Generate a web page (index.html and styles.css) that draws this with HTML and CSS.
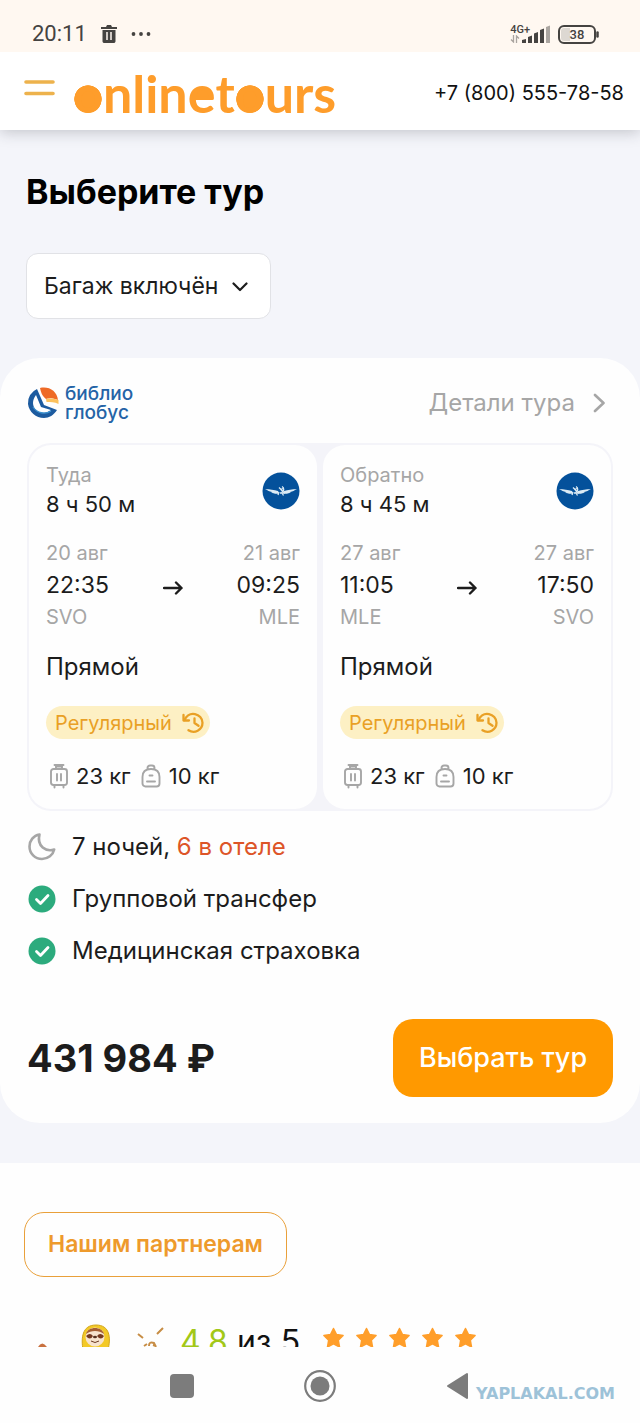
FILE: index.html
```html
<!DOCTYPE html>
<html lang="ru">
<head>
<meta charset="utf-8">
<meta name="viewport" content="width=device-width, initial-scale=1">
<title>Выберите тур</title>
<link rel="stylesheet" href="styles.css">
</head>
<body>
<svg class="sprite" aria-hidden="true">
  <symbol id="star" viewBox="0 0 22 22"><path d="M11 1.500l3 6 6.600 1-4.800 4.700 1.200 6.800-6-3.200-6 3.200 1.200-6.800L1.400 8.500l6.600-1z" fill="#ff9e2a" stroke="#ff9e2a" stroke-width="1.500" stroke-linejoin="round"/></symbol>
  <symbol id="wings" viewBox="0 0 38 38">
    <circle cx="19" cy="19" r="18.500" fill="#04519b"/>
    <path d="M3 17c5 .4 9 .7 13 2l1 2.500c-3 .6-6 0-8-1.300l2 .1c-3-.5-5-1.300-6-2.200l2 .1C5 17.800 3.500 17.500 3 17zM35 17c-5 .4-9 .7-13 2l-1 2.500c3 .6 6 0 8-1.300l-2 .1c3-.5 5-1.300 6-2.200l-2 .1c2-.4 3.500-.7 4-1.200z" fill="#dcebf5"/>
    <path d="M20 14.500c2.500 1.500 2.300 5-.5 6M17 15.500l2 2 2-1M18.500 17l4 4.500M17 20l-1 3M20 21l1.500 2.500M18 21h2.500" fill="none" stroke="#dcebf5" stroke-width="1.300"/>
  </symbol>
  <symbol id="arrow" viewBox="0 0 20 14"><path d="M1 7h17.500M13 1.500L18.500 7 13 12.500" fill="none" stroke="#1c1c1c" stroke-width="2.400" stroke-linecap="round" stroke-linejoin="round"/></symbol>
  <symbol id="history" viewBox="0 0 22 22"><path d="M1.500 3v5.500H7" fill="none" stroke="#e9a025" stroke-width="2.300" stroke-linecap="round" stroke-linejoin="round"/><path d="M2.500 8C5 3 9 1.300 13 2.100c4 .8 7.500 4.300 7.500 8.700a9 9 0 0 1-14 7.400M12.500 6.500V11l4 2.800" fill="none" stroke="#e9a025" stroke-width="2.300" stroke-linecap="round" stroke-linejoin="round"/></symbol>
  <symbol id="suitcase" viewBox="0 0 18 26"><path d="M3.500 6h11A2.500 2.500 0 0 1 17 8.500v11a2.500 2.500 0 0 1-2.500 2.500h-11A2.500 2.500 0 0 1 1 19.500v-11A2.500 2.500 0 0 1 3.500 6zM6 6V3.500h6V6M4.500 2h9M7 11v6.500M11 11v6.500M4.500 22v2.500M13.500 22v2.500" fill="none" stroke="#a6a6a6" stroke-width="1.900" stroke-linecap="round"/></symbol>
  <symbol id="backpack" viewBox="0 0 20 24"><path d="M1.500 13c0-5 3-8 8.500-8s8.500 3 8.500 8v6.500a3 3 0 0 1-3 3h-11a3 3 0 0 1-3-3zM6.500 5.500V4a2.500 2.500 0 0 1 2.500-2.500h2A2.500 2.500 0 0 1 13.500 4v1.500M8.500 11.500h3M6 17.500h8" fill="none" stroke="#a6a6a6" stroke-width="1.900" stroke-linecap="round"/></symbol>
  <symbol id="check" viewBox="0 0 28 28"><circle cx="14" cy="14" r="13.500" fill="#2cab7d"/><path d="M8.500 14.500l4 4 7.500-8" fill="none" stroke="#fff" stroke-width="2.800" stroke-linecap="round" stroke-linejoin="round"/></symbol>
</svg>

<div class="statusbar">
  <div class="status-group">
    <span class="clock">20:11</span>
    <svg width="16" height="19" viewBox="0 0 16 19"><path d="M0 2h5l1-2h4l1 2h5v2H0zM1.500 5h13v11.500A1.800 1.800 0 0 1 12.700 18H3.300a1.800 1.800 0 0 1-1.800-1.500z" fill="#454341"/><path d="M6 7v8M10 7v8" stroke="#fff8f1" stroke-width="1.500"/></svg>
    <svg width="20" height="6" viewBox="0 0 20 6"><g fill="#454341"><circle cx="2.500" cy="3" r="1.900"/><circle cx="10" cy="3" r="1.900"/><circle cx="17.500" cy="3" r="1.900"/></g></svg>
  </div>
  <div class="status-group status-right">
    <div class="network"><span>4G+</span>
      <svg width="10" height="8" viewBox="0 0 10 8"><path d="M3.500 0v7L1 4.500M6.500 8V1L9 3.500" fill="none" stroke="#aaa5a0" stroke-width="1.300"/></svg>
    </div>
    <svg width="29" height="19" viewBox="0 0 29 19"><path d="M1 18v-3l4-1v4zM7 18v-6l4-1.500V18zM13 18V8.500L17 7v11zM19 18V5l4-1.500V18z" fill="#454341"/><path d="M25 18V2l4-1.500V18z" fill="#aaa5a0"/></svg>
    <svg width="42" height="19" viewBox="0 0 42 19"><rect x="1" y="1" width="36" height="17" rx="5" fill="#fff8f1" stroke="#454341" stroke-width="2"/><path d="M6 3h6v13H6a3 3 0 0 1-3-3V6a3 3 0 0 1 3-3z" fill="#ddd8d2"/><path d="M39.500 7.500v4" stroke="#454341" stroke-width="2.500" stroke-linecap="round"/><text x="19" y="14" text-anchor="middle" class="battery-text">38</text></svg>
  </div>
</div>

<header class="header">
  <button class="menu" type="button" aria-label="Меню"><svg width="31" height="18" viewBox="0 0 31 18"><path d="M2 3h27M2 14.500h27" stroke="#edb24c" stroke-width="3.600" stroke-linecap="round"/></svg></button>
  <a class="brand" href="#"><span class="disc">o</span>nlin<span class="bowl">e</span>t<span class="disc">o</span>urs</a>
  <a class="phone" href="tel:+78005557858">+7 (800) 555-78-58</a>
</header>

<main class="tours">
  <h1>Выберите тур</h1>
  <div class="filter">
    <select aria-label="Багаж"><option>Багаж включён</option></select>
    <svg width="16" height="10" viewBox="0 0 16 10"><path d="M1.500 1.500L8 8l6.500-6.500" fill="none" stroke="#1c1c1c" stroke-width="2.200" stroke-linecap="round" stroke-linejoin="round"/></svg>
  </div>

  <article class="card">
    <div class="card-head">
      <div class="operator">
        <svg width="32" height="32" viewBox="0 0 32 32"><path d="M10 2A15 15 0 0 0 1 17c1 8 8 14 16 14 5 0 10-3 13-8l-13-5z" fill="#1d5b9f"/><path d="M9 8c-4 5-4 11 0 15 5 4 11 3 15 0l-10-3z" fill="#fff"/><path d="M6 20c4 6 12 8 18 4" fill="none" stroke="#3c92d0" stroke-width="1.300"/><path d="M13 1c9-2 17 3 18 12-5-2-9-2-12-1-4-3-5-7-6-11z" fill="#ee6a26"/><path d="M19 12c5-1 9 0 12.500 1v4c-4-2-8-2-12-2z" fill="#fcc15d"/></svg>
        <span class="operator-name"><span>библио</span><span>глобус</span></span>
      </div>
      <a class="details" href="#">Детали тура <svg width="12" height="20" viewBox="0 0 12 20"><path d="M2 2l8.500 8L2 18" fill="none" stroke="#a6a6a6" stroke-width="2.600" stroke-linecap="round" stroke-linejoin="round"/></svg></a>
    </div>

    <div class="flights">
      <section class="flight">
        <div class="flight-head"><div><div class="muted">Туда</div><div class="duration">8 ч 50 м</div></div><svg class="airline"><use href="#wings"/></svg></div>
        <div class="route">
          <div><div class="muted">20 авг</div><div class="time">22:35</div><div class="muted">SVO</div></div>
          <svg class="arrow"><use href="#arrow"/></svg>
          <div class="arrival"><div class="muted">21 авг</div><div class="time">09:25</div><div class="muted">MLE</div></div>
        </div>
        <div>Прямой</div>
        <div class="badge">Регулярный <svg width="22" height="22"><use href="#history"/></svg></div>
        <div class="bags"><svg width="18" height="26"><use href="#suitcase"/></svg><span>23 кг</span><svg class="pack"><use href="#backpack"/></svg><span>10 кг</span></div>
      </section>
      <section class="flight">
        <div class="flight-head"><div><div class="muted">Обратно</div><div class="duration">8 ч 45 м</div></div><svg class="airline"><use href="#wings"/></svg></div>
        <div class="route">
          <div><div class="muted">27 авг</div><div class="time">11:05</div><div class="muted">MLE</div></div>
          <svg class="arrow"><use href="#arrow"/></svg>
          <div class="arrival"><div class="muted">27 авг</div><div class="time">17:50</div><div class="muted">SVO</div></div>
        </div>
        <div>Прямой</div>
        <div class="badge">Регулярный <svg width="22" height="22"><use href="#history"/></svg></div>
        <div class="bags"><svg width="18" height="26"><use href="#suitcase"/></svg><span>23 кг</span><svg class="pack"><use href="#backpack"/></svg><span>10 кг</span></div>
      </section>
    </div>

    <ul class="features">
      <li><svg width="28" height="28" viewBox="0 0 28 28"><path d="M11.500 1.500C5.500 2.500 1.500 7.500 1.500 13.500c0 7 5.500 12.500 12.500 12.500 6 0 11-4 12.200-9.500-8 2.500-17.700-3-14.700-15z" fill="none" stroke="#a6a6a6" stroke-width="2.600" stroke-linejoin="round"/></svg><span>7 ночей, <em>6 в отеле</em></span></li>
      <li><svg width="28" height="28"><use href="#check"/></svg><span>Групповой трансфер</span></li>
      <li><svg width="28" height="28"><use href="#check"/></svg><span>Медицинская страховка</span></li>
    </ul>

    <div class="buy">
      <span class="price">431 984 ₽</span>
      <button class="choose" type="button">Выбрать тур</button>
    </div>
  </article>
</main>

<section class="partners">
  <a class="partners-link" href="#">Нашим партнерам</a>
  <div class="rating">
    <svg class="mascots" width="142" height="30" viewBox="0 0 142 30">
      <path d="M14 27q4-7 9 0z" fill="#c9713f"/>
      <path d="M59 30c-2-12-1-25 13-25s15 13 12 25z" fill="#f3c927" stroke="#d1a51c"/><ellipse cx="71" cy="17" rx="9.500" ry="9.500" fill="#f7e3cd"/><path d="M62 14c2-8 16-8 18 0-5-4-13-4-18 0z" fill="#a65e32"/><path d="M62 16q4-4 7 0-3 5-7 0zM73 16q3-4 7 0-3 5-7 0z" fill="#75391f"/><ellipse cx="71" cy="17" rx="2" ry="1.300" fill="#56311f"/><path d="M67 21q4 3 8 0" fill="none" stroke="#6b3a22"/>
      <path d="M114 14l5 4M133 14l6-6M120 26l3-2M125 26q0-5 5-3l2 4M129 25l3 1" stroke="#c78d45" stroke-width="2" fill="none"/>
    </svg>
    <span class="score"><b>4.8</b> из 5</span>
    <span class="stars"><svg><use href="#star"/></svg><svg><use href="#star"/></svg><svg><use href="#star"/></svg><svg><use href="#star"/></svg><svg><use href="#star"/></svg></span>
  </div>
</section>

<nav class="navbar">
  <button type="button" aria-label="Недавние"><svg width="24" height="24"><rect width="24" height="24" rx="4" fill="#7c7c7c"/></svg></button>
  <button type="button" aria-label="Домой"><svg width="32" height="32"><circle cx="16" cy="16" r="14.800" fill="none" stroke="#7c7c7c" stroke-width="2.200"/><circle cx="16" cy="16" r="9.500" fill="#7c7c7c"/></svg></button>
  <button type="button" aria-label="Назад"><svg width="24" height="28"><path d="M21 2v24L2 14z" fill="#7c7c7c" stroke="#7c7c7c" stroke-width="2" stroke-linejoin="round"/></svg></button>
  <span class="watermark">YAPLAKAL.COM</span>
</nav>
</body>
</html>
```

FILE: styles.css
```css
* { box-sizing: border-box; }
body { margin: 0; background: #fefefe; color: #1c1c1c; font-family: Inter, "Open Sans", sans-serif; font-size: 24px; line-height: 32px; }
svg { display: block; flex: none; }
a { color: inherit; text-decoration: none; }
button { border: 0; padding: 0; background: none; font: inherit; color: inherit; }
.sprite { position: absolute; width: 0; height: 0; }

.statusbar { position: relative; z-index: 1; display: flex; justify-content: space-between; height: 52px; padding: 16px 40px 0 32px; background: #fff8f1; color: #454341; }
.status-group { display: flex; align-items: center; gap: 14px; height: 36px; }
.clock { font: 22px/36px Roboto, sans-serif; }
.status-right { gap: 8px; }
.network { font: 500 11px/11px Roboto, sans-serif; margin-right: -17px; padding-bottom: 2px; }
.battery-text { font: 500 13px Roboto, sans-serif; fill: #454341; }

.header { position: relative; display: flex; align-items: center; height: 78px; padding: 4px 16px 0 24px; background: #fff; box-shadow: 0 2px 14px rgba(40, 45, 55, .25); }
.menu { margin: 0 18px 10px 0; }
.brand { display: flex; align-items: baseline; color: #fe9d2b; font: 700 52px/64px Lato, sans-serif; }
.disc { background: radial-gradient(circle 14px at 50% 38px, currentColor 96%, transparent); }
.bowl { background: linear-gradient(currentColor, currentColor) 50% 29px / 15px 9px no-repeat; }
.phone { margin-left: auto; color: #111; font-size: 20px; white-space: nowrap; }

.tours { padding: 40px 0; background: #f4f5fa; }
h1 { margin: 0 26px; color: #000; font-size: 34px; line-height: 44px; font-weight: 700; }
.filter { position: relative; width: 245px; margin: 39px 26px; }
.filter select { appearance: none; display: block; width: 100%; height: 66px; padding: 0 42px 0 17px; border: 1px solid #e1e2e6; border-radius: 12px; background: #fff; color: #1c1c1c; font: inherit; font-size: 23px; }
.filter svg { position: absolute; right: 23px; top: 29px; pointer-events: none; }

.card { padding: 20px 27px 26px; border-radius: 40px; background: #fefefe; }
.card-head { display: flex; align-items: center; justify-content: space-between; height: 50px; margin-bottom: 15px; }
.operator { display: flex; align-items: center; gap: 6px; color: #2463a6; font: 500 19px/19px Inter, sans-serif; }
.operator-name { display: grid; }
.details { display: flex; align-items: center; gap: 18px; padding-right: 8px; color: #a6a6a6; }

.flights { display: grid; grid-template-columns: 1fr 1fr; gap: 6px; padding: 2px; border-radius: 24px; background: #f4f4f9; }
.flight { padding: 17px; border-radius: 22px; background: #fefefe; }
.flight-head, .route { display: flex; align-items: center; justify-content: space-between; }
.muted { color: #a6a6a6; font-size: 20px; line-height: 26px; }
.duration { font-size: 22px; }
.airline { width: 38px; height: 38px; }
.route { margin: 20px 0 21px; }
.time { margin: 2px 0; font-size: 23px; line-height: 34px; }
.arrival { text-align: right; }
.arrow { width: 20px; height: 14px; margin-top: 6px; }
.badge { display: flex; align-items: center; gap: 10px; width: fit-content; height: 33px; margin: 23px 0 21px; padding: 0 6px 0 9px; border-radius: 17px; background: #fdf0c4; color: #e9a025; font-size: 20px; }
.bags { display: flex; align-items: center; gap: 8px; padding-left: 4px; font-size: 22px; white-space: nowrap; }
.pack { width: 20px; height: 24px; margin-left: 2px; }

.features { margin: 10px 0 0; padding: 0 0 0 1px; list-style: none; }
.features li { display: flex; align-items: center; gap: 16px; height: 52px; }
.features em { color: #dd5528; font-style: normal; }
.buy { display: flex; align-items: center; justify-content: space-between; margin-top: 42px; }
.price { font-size: 38px; line-height: 48px; font-weight: 700; }
.choose { width: 220px; height: 78px; border-radius: 20px; background: #ff9900; color: #fff; font-size: 27px; font-weight: 500; }

.partners { padding: 49px 24px 0; }
.partners-link { display: inline-block; padding: 15px 23px; border: 1px solid #e9a03a; border-radius: 20px; color: #ee9a2c; font-size: 23px; line-height: 33px; font-weight: 600; }
.rating { display: flex; align-items: flex-start; height: 27px; margin-top: 43px; overflow: hidden; }
.mascots { margin-right: 14px; }
.score { color: #111; font-size: 32px; line-height: 44px; white-space: nowrap; }
.score b { color: #a2c817; font-weight: 400; }
.stars { display: flex; gap: 10px; margin: 7px 0 0 22px; }
.stars svg { width: 23px; height: 22px; }

.navbar { position: relative; display: flex; justify-content: center; align-items: center; gap: 110px; height: 77px; }
.watermark { position: absolute; right: 25px; bottom: 18px; color: #9dc2d8; font: 700 16px/24px "DejaVu Sans", sans-serif; }
```
